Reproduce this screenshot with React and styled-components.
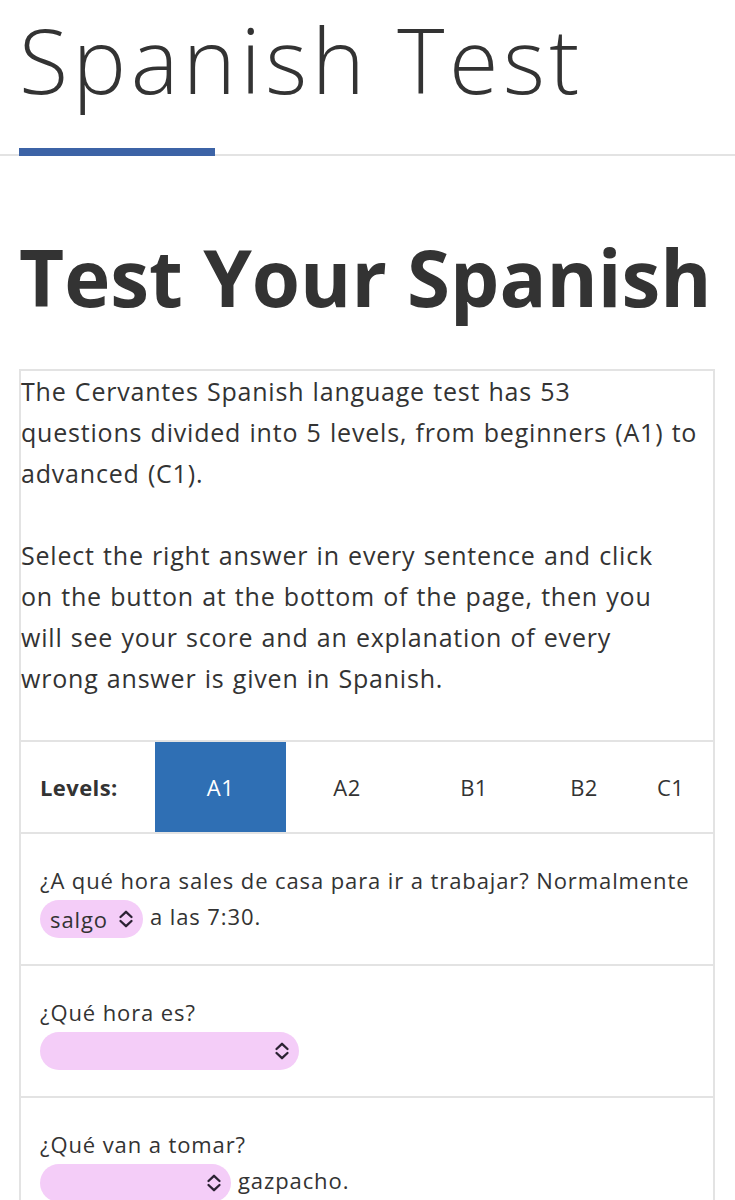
import React from "react";
import styled, { createGlobalStyle } from "styled-components";

const Global = createGlobalStyle`
  html, body { margin: 0; padding: 0; background: #fff; }
  body { font-family: "Open Sans", "Liberation Sans", sans-serif; color: #333; }
  * { box-sizing: border-box; }
`;

const Header = styled.header`
  border-bottom: 2px solid #e3e3e3;
`;

const SiteTitle = styled.h1`
  margin: 0;
  padding: 9px 0 0 19px;
  font-weight: 300;
  font-size: 90px;
  line-height: 100px;
  letter-spacing: 4.5px;
  color: #333;
`;

const TitleBar = styled.div`
  width: 196px;
  height: 8px;
  margin: 39px 0 -2px 19px;
  background: #3c63a6;
  position: relative;
`;

const Main = styled.main`
  padding: 0 20px 0 19px;
`;

const PageTitle = styled.h2`
  margin: 71px 0 42px;
  font-size: 78px;
  line-height: 100px;
  font-weight: 700;
  letter-spacing: 0px;
  white-space: nowrap;
  color: #333;
`;

const Box = styled.section`
  border: 2px solid #e3e3e3;
  border-bottom: none;
`;

const Intro = styled.p`
  margin: 0 0 41px;
  font-size: 25px;
  line-height: 41px;
  letter-spacing: 0.8px;
  word-spacing: 1px;
  color: #333;
`;

const LevelsRow = styled.div`
  display: grid;
  grid-template-columns: 134px 131px 122px 132px 88px 1fr;
  height: 94px;
  border-top: 2px solid #e3e3e3;
  border-bottom: 2px solid #e3e3e3;
  align-items: stretch;
`;

const Cell = styled.div`
  display: flex;
  align-items: center;
  justify-content: ${(p) => (p.$label ? "flex-start" : "center")};
  padding-left: ${(p) => (p.$label ? "19px" : "0")};
  font-size: 22px;
  letter-spacing: 0.4px;
  font-weight: ${(p) => (p.$label ? 700 : 400)};
  background: ${(p) => (p.$active ? "#2f6fb4" : "transparent")};
  color: ${(p) => (p.$active ? "#fff" : "#333")};
`;

const Question = styled.div`
  padding: 28px 19px 26px;
  border-bottom: 2px solid #e3e3e3;
  font-size: 22px;
  line-height: 36px;
  letter-spacing: 0.9px;
  color: #333;
`;

const Pill = styled.span`
  display: inline-flex;
  align-items: center;
  justify-content: space-between;
  vertical-align: middle;
  width: ${(p) => p.$w}px;
  height: 38px;
  padding: 0 9px 1px 10px;
  margin-right: 7px;
  border-radius: 19px;
  background: #f4cdf8;
  font-size: 22px;
  letter-spacing: 0.9px;
  color: #333;
`;

const Chevron = () => (
  <svg width="16" height="20" viewBox="0 0 16 20" fill="none" stroke="#2b2233" strokeWidth="2.3" strokeLinecap="round" strokeLinejoin="round">
    <path d="M2.5 8 L8 2.8 L13.5 8" />
    <path d="M2.5 12 L8 17.2 L13.5 12" />
  </svg>
);

const Select = ({ w, value }) => (
  <Pill $w={w}>
    <span>{value}</span>
    <Chevron />
  </Pill>
);

export default function App() {
  return (
    <>
      <Global />
      <Header>
        <SiteTitle>Spanish Test</SiteTitle>
        <TitleBar />
      </Header>
      <Main>
        <PageTitle>Test Your Spanish</PageTitle>
        <Box>
          <Intro>
            The Cervantes Spanish language test has 53
            <br />
            questions divided into 5 levels, from beginners (A1) to
            <br />
            advanced (C1).
          </Intro>
          <Intro>
            Select the right answer in every sentence and click
            <br />
            on the button at the bottom of the page, then you
            <br />
            will see your score and an explanation of every
            <br />
            wrong answer is given in Spanish.
          </Intro>
          <LevelsRow>
            <Cell $label>Levels:</Cell>
            <Cell $active>A1</Cell>
            <Cell>A2</Cell>
            <Cell>B1</Cell>
            <Cell>B2</Cell>
            <Cell>C1</Cell>
          </LevelsRow>
          <Question>
            ¿A qué hora sales de casa para ir a trabajar? Normalmente
            <br />
            <Select w={103} value="salgo" />a las 7:30.
          </Question>
          <Question>
            ¿Qué hora es?
            <br />
            <Select w={259} value="" />
          </Question>
          <Question>
            ¿Qué van a tomar?
            <br />
            <Select w={191} value="" />gazpacho.
          </Question>
        </Box>
      </Main>
    </>
  );
}
